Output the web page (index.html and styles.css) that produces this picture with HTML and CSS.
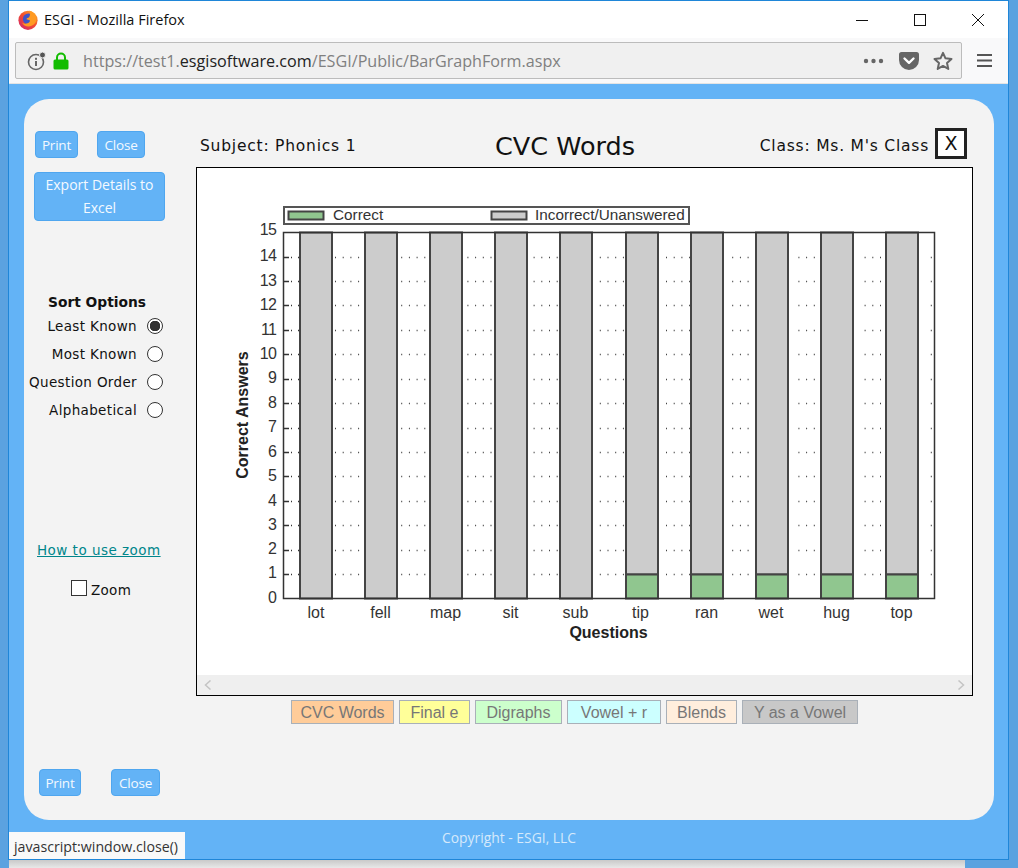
FILE: index.html
```html
<!DOCTYPE html>
<html lang="en">
<head>
  <meta charset="UTF-8" />
  <title>ESGI - Mozilla Firefox</title>
  <link rel="stylesheet" href="styles.css">
</head>
<body>
  <div class="window">
    <div class="titlebar">
      <svg class="ff-logo" width="20" height="20" viewBox="0 0 20 20">
        <defs>
          <linearGradient id="ffOuter" x1="0.9" y1="0" x2="0.1" y2="1">
            <stop offset="0" stop-color="#ffb52e" />
            <stop offset="0.45" stop-color="#f4502c" />
            <stop offset="1" stop-color="#d2246e" />
          </linearGradient>
        </defs>
        <circle cx="10" cy="10.300" r="9.600" fill="url(#ffOuter)" />
        <circle cx="10.500" cy="9" r="5.600" fill="#3f55c8" />
        <path d="M11 .6c3.500 .8 7.500 3.800 7.500 8.400 0 4-3.500 7.400-8 7.400-3 0-5.300-1.500-6.400-4 1.600 1.400 3.600 1.600 5.400 .9 1.800-.7 2.700-2 2.300-3.100-1-.5-2.300-.3-3.400-.9 .3-1.200 1.500-1.500 2.700-2.100C12.300 5.600 12.400 3 11 .6z" fill="#ff9a22" />
      </svg>
      <span class="title-text">ESGI - Mozilla Firefox</span>
      <div class="win-controls">
        <svg width="14" height="14" viewBox="0 0 14 14"><path d="M1 7.500h12" stroke="#111" fill="none" /></svg>
        <svg width="14" height="14" viewBox="0 0 14 14"><rect x="1.500" y="1.500" width="11" height="11" stroke="#111" fill="none" /></svg>
        <svg width="14" height="14" viewBox="0 0 14 14"><path d="M1 1l12 12M13 1L1 13" stroke="#111" fill="none" /></svg>
      </div>
    </div>

    <div class="toolbar">
      <div class="urlbar">
        <svg class="info-icon" width="20" height="20" viewBox="0 0 20 20">
          <circle cx="9" cy="11" r="7.500" fill="none" stroke="#666" stroke-width="1.600" />
          <rect x="8" y="10" width="2" height="5" fill="#666" />
          <rect x="8" y="6.800" width="2" height="2" fill="#666" />
          <circle cx="15.500" cy="4" r="3" fill="#555" stroke="#f0f0f0" />
        </svg>
        <svg class="lock-icon" width="16" height="18" viewBox="0 0 16 18">
          <path d="M4 8V5.500a4 4 0 0 1 8 0V8" fill="none" stroke="#12bc00" stroke-width="2" />
          <rect x="0.500" y="7.500" width="15" height="10" rx="1.500" fill="#12bc00" />
        </svg>
        <span class="url"><span class="url-dim">https://test1.</span>esgisoftware.com<span class="url-dim">/ESGI/Public/BarGraphForm.aspx</span></span>
        <div class="url-actions">
          <svg width="22" height="6" viewBox="0 0 22 6"><circle cx="3" cy="3" r="2.200" fill="#666" /><circle cx="10.500" cy="3" r="2.200" fill="#666" /><circle cx="18" cy="3" r="2.200" fill="#666" /></svg>
          <svg width="20" height="18" viewBox="0 0 20 18"><path d="M2.500 0h15A2.500 2.500 0 0 1 20 2.500V8A10 10 0 0 1 0 8V2.500A2.500 2.500 0 0 1 2.500 0z" fill="#666" /><path d="M5.500 6.500l4.500 4.300 4.500-4.300" fill="none" stroke="#fff" stroke-width="2.400" stroke-linecap="round" stroke-linejoin="round" /></svg>
          <svg width="20" height="20" viewBox="0 0 20 20"><path d="M10 1.800l2.500 5.500 6 .7-4.500 4 1.300 5.900-5.300-3-5.300 3L6 12 1.500 8l6-.7z" fill="none" stroke="#666" stroke-width="2" stroke-linejoin="round" /></svg>
        </div>
      </div>
      <svg class="menu-icon" width="15" height="15" viewBox="0 0 15 15"><path d="M0 2h15M0 7.500h15M0 13h15" stroke="#555" stroke-width="2" fill="none" /></svg>
    </div>

    <div class="content">
      <div class="card">
        <div class="sidebar">
          <div class="btn-row">
            <a class="btn btn-print" href="#">Print</a>
            <a class="btn btn-close" href="#">Close</a>
          </div>
          <a class="btn btn-export" href="#">Export Details to Excel</a>

          <div class="sort-title">Sort Options</div>
          <label class="sort-row">Least Known <input type="radio" name="sort" checked></label>
          <label class="sort-row">Most Known <input type="radio" name="sort"></label>
          <label class="sort-row">Question Order <input type="radio" name="sort"></label>
          <label class="sort-row">Alphabetical <input type="radio" name="sort"></label>

          <a class="zoom-link" href="#">How to use zoom</a>
          <label class="zoom-check"><input type="checkbox"> Zoom</label>

          <div class="btn-row btn-row-bottom">
            <a class="btn btn-print" href="#">Print</a>
            <a class="btn btn-close" href="#">Close</a>
          </div>
        </div>

        <div class="main">
          <div class="report-head">
            <span class="subject">Subject: Phonics 1</span>
            <span class="report-title">CVC Words</span>
            <span class="class-name">Class: Ms. M's Class <a class="x-btn" href="#">X</a></span>
          </div>

          <div class="chart-box">
            <svg class="chart" width="775" height="507" viewBox="197 168 775 507">
              <!-- legend -->
              <rect class="frame" x="284" y="207" width="405" height="17" />
              <rect class="bar-green" x="288.500" y="211.500" width="35" height="8" />
              <text class="lbl" x="333" y="220">Correct</text>
              <rect class="bar-grey" x="491.500" y="211.500" width="35" height="8" />
              <text class="lbl" x="535" y="220">Incorrect/Unanswered</text>

              <!-- dotted grid, one dash group per gap between bars -->
              <g class="dots">
                <path d="M335 257.500H935M335 281.500H935M335 305.500H935M335 330.500H935M335 354.500H935M335 379.500H935M335 403.500H935M335 428.500H935M335 452.500H935M335 476.500H935M335 501.500H935M335 525.500H935M335 550.500H935M335 574.500H935" />
              </g>
              <path class="ticks" d="M284 257.500h16M284 281.500h16M284 305.500h16M284 330.500h16M284 354.500h16M284 379.500h16M284 403.500h16M284 428.500h16M284 452.500h16M284 476.500h16M284 501.500h16M284 525.500h16M284 550.500h16M284 574.500h16" />

              <!-- bars -->
              <rect class="bar-grey" x="300" y="232.500" width="32" height="366" />
              <rect class="bar-grey" x="365" y="232.500" width="32" height="366" />
              <rect class="bar-grey" x="430" y="232.500" width="32" height="366" />
              <rect class="bar-grey" x="495" y="232.500" width="32" height="366" />
              <rect class="bar-grey" x="560" y="232.500" width="32" height="366" />
              <rect class="bar-grey" x="626" y="232.500" width="32" height="342" />
              <rect class="bar-green" x="626" y="574.500" width="32" height="24" />
              <rect class="bar-grey" x="691" y="232.500" width="32" height="342" />
              <rect class="bar-green" x="691" y="574.500" width="32" height="24" />
              <rect class="bar-grey" x="756" y="232.500" width="32" height="342" />
              <rect class="bar-green" x="756" y="574.500" width="32" height="24" />
              <rect class="bar-grey" x="821" y="232.500" width="32" height="342" />
              <rect class="bar-green" x="821" y="574.500" width="32" height="24" />
              <rect class="bar-grey" x="886" y="232.500" width="32" height="342" />
              <rect class="bar-green" x="886" y="574.500" width="32" height="24" />
              <rect class="frame-plot" x="283.500" y="232.500" width="651" height="366" />

              <!-- y axis -->
              <g class="y-labels">
                <text x="276" y="235">15</text>
                <text x="276" y="261">14</text>
                <text x="276" y="286">13</text>
                <text x="276" y="310">12</text>
                <text x="276" y="335">11</text>
                <text x="276" y="359">10</text>
                <text x="276" y="383">9</text>
                <text x="276" y="408">8</text>
                <text x="276" y="432">7</text>
                <text x="276" y="457">6</text>
                <text x="276" y="481">5</text>
                <text x="276" y="506">4</text>
                <text x="276" y="530">3</text>
                <text x="276" y="554">2</text>
                <text x="276" y="578">1</text>
                <text x="276" y="603">0</text>
              </g>
              <text class="axis-title" transform="translate(248 415) rotate(-90)" text-anchor="middle">Correct Answers</text>

              <!-- x axis -->
              <g class="x-labels">
                <text x="316" y="618">lot</text>
                <text x="380.500" y="618">fell</text>
                <text x="445.500" y="618">map</text>
                <text x="510.500" y="618">sit</text>
                <text x="575.500" y="618">sub</text>
                <text x="640.500" y="618">tip</text>
                <text x="706.500" y="618">ran</text>
                <text x="771" y="618">wet</text>
                <text x="836.500" y="618">hug</text>
                <text x="901.500" y="618">top</text>
              </g>
              <text class="axis-title" x="608.500" y="638" text-anchor="middle">Questions</text>
            </svg>
            <div class="h-scroll">
              <svg width="8" height="10" viewBox="0 0 8 10"><path d="M6.500 .5L1.500 5l5 4.500" fill="none" stroke="#c4c4c4" stroke-width="1.500" /></svg>
              <svg width="8" height="10" viewBox="0 0 8 10"><path d="M1.500 .5l5 4.500-5 4.500" fill="none" stroke="#c4c4c4" stroke-width="1.500" /></svg>
            </div>
          </div>

          <div class="tabs">
            <a class="tab tab-orange" href="#">CVC Words</a>
            <a class="tab tab-yellow" href="#">Final e</a>
            <a class="tab tab-green" href="#">Digraphs</a>
            <a class="tab tab-cyan" href="#">Vowel + r</a>
            <a class="tab tab-peach" href="#">Blends</a>
            <a class="tab tab-grey" href="#">Y as a Vowel</a>
          </div>
        </div>
      </div>
      <div class="copyright">Copyright - ESGI, LLC</div>
      <div class="status-tip">javascript:window.close()</div>
    </div>
  </div>
  <div class="below-window"></div>
</body>
</html>
```

FILE: styles.css
```css
html, body {
  margin: 0;
  padding: 0;
}

body {
  width: 1018px;
  height: 868px;
  overflow: hidden;
  background: #5ba2e0;
  font-family: "DejaVu Sans", sans-serif;
}

a {
  text-decoration: none;
}

.window {
  width: 1001px;
  height: 860px;
  margin-left: 8px;
  box-sizing: border-box;
  border: 1px solid #1f86d8;
  display: flex;
  flex-direction: column;
}

.titlebar {
  height: 37px;
  flex: none;
  background: #fff;
  display: flex;
  align-items: center;
  padding-left: 9px;
}

.ff-logo {
  margin-right: 6px;
}

.title-text {
  font-family: "Open Sans", sans-serif;
  font-size: 14.500px;
  color: #111;
}

.win-controls {
  margin-left: auto;
  display: flex;
  gap: 44px;
  padding-right: 23px;
}

.toolbar {
  height: 46px;
  flex: none;
  box-sizing: border-box;
  background: #f9f9fa;
  border-bottom: 1px solid #e4e4e4;
  display: flex;
  align-items: center;
  padding: 0 16px 0 6px;
}

.urlbar {
  width: 947px;
  height: 37px;
  box-sizing: border-box;
  background: #f0f0f0;
  border: 1px solid #bcbcbc;
  border-radius: 2px;
  display: flex;
  align-items: center;
  padding-left: 11px;
}

.info-icon {
  margin-right: 6px;
}

.lock-icon {
  margin-right: 14px;
}

.url {
  font-family: "Open Sans", sans-serif;
  font-size: 16.150px;
  color: #222;
}

.url-dim {
  color: #808080;
}

.url-actions {
  margin-left: auto;
  display: flex;
  align-items: center;
  gap: 14px;
  padding-right: 8px;
}

.menu-icon {
  margin-left: auto;
}

.content {
  flex: 1;
  position: relative;
  background: #63b3f6;
  padding: 15px 14px 0 15px;
  display: flex;
  flex-direction: column;
}

.card {
  height: 721px;
  background: #f3f3f3;
  border-radius: 25px;
  display: flex;
}

.sidebar {
  width: 172px;
  flex: none;
  box-sizing: border-box;
  padding-top: 32px;
  display: flex;
  flex-direction: column;
}

.btn-row {
  display: flex;
  padding-left: 11px;
  gap: 19px;
}

.btn {
  box-sizing: border-box;
  height: 27px;
  background: #63b3f6;
  border: 1px solid #4fa6ef;
  border-radius: 4px;
  color: #f4f9ff;
  font-family: "Open Sans", sans-serif;
  font-size: 13.500px;
  letter-spacing: -0.200px;
  line-height: 26px;
  text-align: center;
}

.btn-print {
  width: 43px;
}

.btn-close {
  width: 48px;
}

.btn-export {
  width: 131px;
  height: 49px;
  margin: 14px 0 0 10px;
  padding: 0 6px;
  font-size: 14px;
  letter-spacing: 0;
  line-height: 23px;
}

.sort-title {
  margin: 73px 0 2px 0;
  padding-right: 26px;
  text-align: center;
  font-size: 13.800px;
  font-weight: bold;
  color: #111;
  line-height: 16px;
}

.sort-row {
  height: 28px;
  padding-right: 33px;
  display: flex;
  align-items: center;
  justify-content: flex-end;
  gap: 10px;
  font-size: 13.500px;
  letter-spacing: 0.350px;
  color: #111;
}

.sort-row input {
  appearance: none;
  width: 16px;
  height: 16px;
  margin: 0;
  background: #fff;
  border: 1px solid #333;
  border-radius: 50%;
}

.sort-row input:checked {
  background: radial-gradient(circle, #333 0, #333 5px, #fff 5.500px);
}

.zoom-link {
  margin: 118px 0 0 13px;
  font-size: 13.500px;
  letter-spacing: 0.470px;
  line-height: 16px;
  color: #00868b;
  text-decoration: underline;
}

.zoom-check {
  margin: 22px 0 0 47px;
  display: flex;
  align-items: center;
  gap: 4px;
  font-size: 13.500px;
  letter-spacing: 0.300px;
  color: #111;
}

.zoom-check input {
  appearance: none;
  width: 16px;
  height: 16px;
  margin: 0 0 4px 0;
  background: #fff;
  border: 1px solid #333;
}

.btn-row-bottom {
  margin-top: auto;
  margin-bottom: 24px;
  padding-left: 15px;
  gap: 30px;
}

.btn-row-bottom .btn-print {
  width: 42px;
}

.btn-row-bottom .btn-close {
  width: 49px;
}

.main {
  width: 777px;
  flex: none;
}

.report-head {
  height: 68px;
  box-sizing: border-box;
  padding: 25px 6px 0 4px;
  display: grid;
  grid-template-columns: 295px auto 1fr;
  align-items: center;
}

.subject, .class-name {
  font-size: 15.500px;
  letter-spacing: 0.780px;
  color: #111;
}

.report-title {
  font-size: 25.500px;
  color: #111;
}

.class-name {
  justify-self: end;
  display: flex;
  align-items: center;
  gap: 6px;
}

.x-btn {
  width: 32px;
  height: 31px;
  margin: -3px 0 1px 0;
  box-sizing: border-box;
  background: #fff;
  border: 3px solid #222;
  color: #111;
  font-size: 19px;
  letter-spacing: 0;
  line-height: 25px;
  text-align: center;
}

.chart-box {
  height: 529px;
  box-sizing: border-box;
  background: #fff;
  border: 1px solid #000;
  display: flex;
  flex-direction: column;
}

.chart {
  display: block;
  flex: none;
  font-family: "Liberation Sans", sans-serif;
}

.frame {
  fill: #fff;
  stroke: #555;
  stroke-width: 2;
}

.frame-plot {
  fill: none;
  stroke: #333;
  stroke-width: 1.500;
}

.bar-green, .bar-grey {
  stroke: #444;
  stroke-width: 2;
}

.bar-green {
  fill: #90c68f;
}

.bar-grey {
  fill: #cccccc;
}

.lbl {
  font-size: 15.300px;
  fill: #333;
}

.dots path {
  fill: none;
  stroke: #444;
  stroke-width: 1.500;
  stroke-dasharray: 1 6.700 1 6.700 1 6.700 1 42.100;
}

.ticks {
  fill: none;
  stroke: #333;
  stroke-width: 1.500;
  stroke-dasharray: 5 2 1 6 1 100;
}

.y-labels text {
  font-size: 16px;
  letter-spacing: -0.800px;
  text-anchor: end;
  fill: #333;
}

.x-labels text {
  font-size: 16px;
  text-anchor: middle;
  fill: #333;
}

.axis-title {
  font-size: 16px;
  font-weight: bold;
  fill: #222;
}

.h-scroll {
  height: 20px;
  flex: none;
  background: #efefef;
  display: flex;
  align-items: center;
  justify-content: space-between;
  padding: 0 7px;
}

.tabs {
  display: flex;
  gap: 5px;
  margin: 4px 0 0 95px;
}

.tab {
  box-sizing: border-box;
  height: 24px;
  background: #ccc;
  border: 1px solid #a9b0b8;
  font-family: "Liberation Sans", sans-serif;
  font-size: 16px;
  line-height: 23px;
  text-align: center;
  color: #777;
}

.tab-orange { width: 103px; background: #ffcc99; }
.tab-yellow { width: 71px; background: #ffff99; }
.tab-green { width: 87px; background: #ccffcc; }
.tab-cyan { width: 94px; background: #ccffff; }
.tab-peach { width: 71px; background: #ffeedd; }
.tab-grey { width: 116px; background: #c8c8c8; }

.copyright {
  text-align: center;
  font-family: "Open Sans", sans-serif;
  font-size: 13.900px;
  color: #d5e9fb;
  margin-top: 8px;
}

.status-tip {
  position: absolute;
  left: 0;
  bottom: 0;
  width: 176px;
  height: 27px;
  box-sizing: border-box;
  padding-left: 5px;
  background: #f9f9f9;
  font-family: "Open Sans", sans-serif;
  font-size: 14.200px;
  line-height: 29px;
  color: #333;
  white-space: nowrap;
}

.below-window {
  width: 956px;
  height: 8px;
  margin-left: 9px;
  background: linear-gradient(#c9c9c9, #e8e8e8);
}
```
